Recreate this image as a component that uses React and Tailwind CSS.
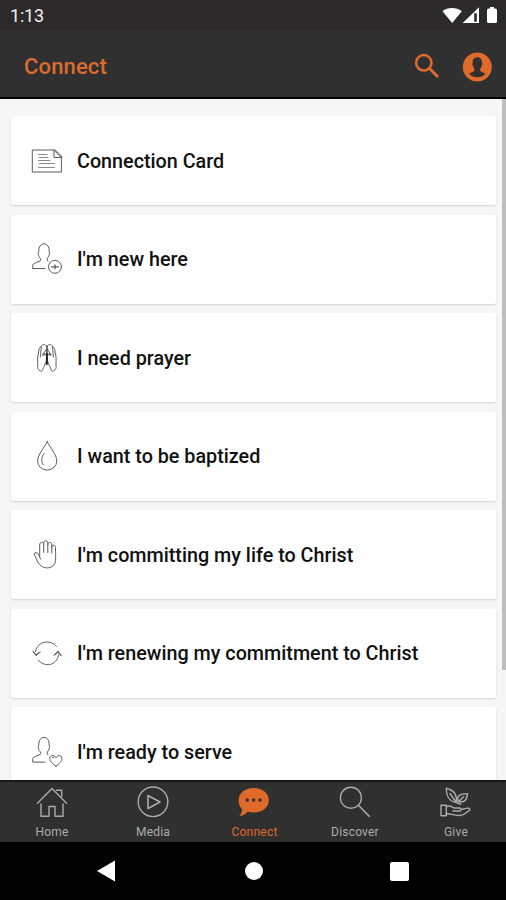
const line = {
  fill: 'none',
  strokeLinecap: 'round',
  strokeLinejoin: 'round',
};

function RowIcon({ children }) {
  return (
    <svg viewBox="0 0 30 30" className="h-[30px] w-[30px] shrink-0 overflow-visible stroke-[#5c5c5c]" strokeWidth="1" {...line}>
      {children}
    </svg>
  );
}

function TabIcon({ children }) {
  return (
    <svg viewBox="0 0 30 30" className="h-[30px] w-[30px] overflow-visible stroke-[#ababab]" strokeWidth="1.4" {...line}>
      {children}
    </svg>
  );
}

const person = 'M13 20.5H.7V17.5Q.8 15.8 3.5 14.8L8 13Q9.5 12 8.2 10.2Q6.8 9 6.3 6.5Q5.8 5 6.7 3.7Q6.5 -3.6 12 -4.3Q17.6 -3.6 17.1 3.5Q18 5 17.3 6.5Q16.8 9 15.4 10.2Q14.7 12 15.8 13.2';

const rows = [
  {
    label: 'Connection Card',
    icon: (
      <>
        <path d="M.7 4H23.3L29.4 10V26H.7Z" />
        <path d="M22 4.2V11.5H29.3L22 4.2" />
        <g className="stroke-[#888]" strokeWidth="1.2">
          <path d="M6.5 8.5H15M7.5 11.5H15.8M6.5 14.5H18M7.5 17.5H22.5M6.5 21.5H22.5" />
        </g>
      </>
    ),
  },
  {
    label: "I'm new here",
    icon: (
      <>
        <path transform="translate(0 4)" d={person} />
        <circle cx="23" cy="22.8" r="6.5" />
        <path d="M19.7 22.8H26.3M23 20.9V24.7" strokeWidth="1.3" />
      </>
    ),
  },
  {
    label: 'I need prayer',
    icon: (
      <>
        <path d="M14.4 3C12.2.5 10.2 1.4 9.4 3.4C7.2 4.2 6.7 7 6.5 10C5.2 13 5.7 18 5.8 23C5.3 25 6 27 9.3 28.3C10.5 28.8 10.8 25.5 12 23.5L14.5 18V3" />
        <path d="M15.3 3C17.5.5 19.5 1.4 20.3 3.4C22.5 4.2 23 7 23.2 10C24.5 13 24 18 24 23C24.5 25 23.7 27 20.5 28.3C19.2 28.8 19 25.5 17.8 23.5L15.3 18V3" />
        <path d="M9.4 4C8.7 8 8.6 11 8.3 14M20.3 4C21 8 21.1 11 21.4 14M14.5 6Q12.6 8.5 10.7 12.6M15.3 6Q17.2 8.5 19 12.6" />
        <path d="M14.9 11V21" strokeWidth="2" className="stroke-[#222]" />
        <path d="M11.3 11.3H13M16.8 11.3H18.5" strokeWidth="1.7" />
      </>
    ),
  },
  {
    label: 'I want to be baptized',
    icon: (
      <>
        <path d="M15.2.7C12.6 6.5 5.6 13.5 5.6 20A9.6 9.1 0 0 0 24.8 20C24.8 13.5 17.8 6.5 15.2.7Z" />
        <path d="M12.2 12.3C9.4 15.5 8.8 20.5 11.2 23.8" />
      </>
    ),
  },
  {
    label: "I'm committing my life to Christ",
    icon: (
      <>
        <path d="M8.6 19.2L7 15.7Q5.8 12.3 3 12.5Q1.7 13 2.7 15.3C4.7 19 4.8 21.5 7.4 24.3C12 29.7 20.6 28.9 22.9 23.2C24.1 20 23.5 15 23.5 7.3C23.3 4.6 20 4.5 19.8 7.2V13M19.8 8V5C19.8 1.5 15.8 1.5 15.8 4.5V12.5M15.8 5V3C15.7.1 11.8.1 11.7 3V12.4M11.7 4C11.4 1.6 7.7 1.7 7.7 4.8V16" />
      </>
    ),
  },
  {
    label: "I'm renewing my commitment to Christ",
    icon: (
      <>
        <path d="M3.5 13.5C5.4 2.6 18.8 1.2 24.6 8.4" />
        <path d="M26.5 17.4C24.5 27.9 12.4 29.6 6.2 22.1" />
        <path d="M.8 13.2L4 17.7L8.4 13.9M1.8 14.1L4 17L7 14.4" />
        <path d="M21.9 17.2L26.1 13.1L29.4 17.7M23 17.2L26.1 14L28.3 17.2" />
      </>
    ),
  },
  {
    label: "I'm ready to serve",
    icon: (
      <>
        <path transform="translate(0 4.6)" d={person} />
        <path d="M24 29.2C21 27 17.7 24.5 17.7 21.4C17.7 17.8 22.3 17.6 24 20.8C25.7 17.6 29.9 17.8 29.9 21.4C29.9 24.5 27 27 24 29.2Z" />
        <path d="M20 20.9Q20.5 19.8 21.8 20.2" />
      </>
    ),
  },
];

const tabs = [
  {
    label: 'Home',
    icon: (
      <TabIcon>
        <path d="M.5 16.2L15 1.5L29.5 16.2M4 17V29.2H12V19.5H18V29.2H26V17M19.5 3.2H24.7V9.5" />
      </TabIcon>
    ),
  },
  {
    label: 'Media',
    icon: (
      <TabIcon>
        <circle cx="15" cy="14.8" r="14.8" />
        <path d="M10 8.5V21.5L22 15Z" strokeWidth="1.6" />
      </TabIcon>
    ),
  },
  {
    label: 'Connect',
    active: true,
    icon: (
      <svg viewBox="0 0 30 30" className="h-[30px] w-[30px] overflow-visible">
        <path fill="#df6a29" d="M14.5 1C23.2 1 29.8 6 29.8 13.3C29.8 20.5 23.5 25.5 14.8 25.5C12.5 25.5 10.5 25.2 8.7 24.7C6.5 27.5 3.5 28.7.2 29C2.4 26.8 3.3 24.5 2.8 21.7C.4 19.5-.4 16.6-.4 13.5C-.4 6.2 6 1 14.5 1Z" />
        <g fill="#302b29">
          <circle cx="8.3" cy="13" r="1.7" />
          <circle cx="14.7" cy="13" r="1.7" />
          <circle cx="21.1" cy="13" r="1.7" />
        </g>
      </svg>
    ),
  },
  {
    label: 'Discover',
    icon: (
      <TabIcon>
        <circle cx="10.9" cy="10.7" r="10.5" />
        <path d="M18.4 18.2L29.2 29.3" strokeWidth="1.6" />
      </TabIcon>
    ),
  },
  {
    label: 'Give',
    icon: (
      <TabIcon>
        <path d="M0 18.2H5.3V28.8H0Z" />
        <path d="M5.3 19.7C8.5 18 10.5 19.2 13 21H18.5C20.8 21.3 20.5 24 18.2 24H11.8M20 22.5L25 21.4C27.5 20.7 29.5 21.5 28.7 23C26.3 25 22.8 28.5 18.5 28.5C13.5 28.5 10 26.5 5.3 26.7" />
        <path d="M15.3 15.5C8.5 14.2 5.3 10.5 5.3 1.2C11.5 2.8 16.5 6.5 15.3 15.5ZM9 6.5L15.3 15.5C17.3 17 18.5 17.3 20 16.8" />
        <path d="M17.3 14.3C15.5 8.8 18.7 6.6 26.5 6.6C26.3 12.5 23.5 16.2 17.3 14.3ZM17 15.2L22.8 9.6" />
      </TabIcon>
    ),
  },
];

function StatusBar() {
  return (
    <div className="flex h-[30px] items-center bg-[#2b292a] pl-[10px] pr-[8px] pt-[2px]">
      <span className="text-[18px] leading-none tracking-[-0.2px] text-[#eee]">1:13</span>
      <svg viewBox="0 0 58 20" className="-mt-px ml-auto h-[20px] w-[58px]" fill="#fff">
        <path d="M2.5 5.3C7.5.9 16.5.9 21.8 5.3L12.2 17Z" />
        <path fillRule="evenodd" d="M39 1.3V17H22.7ZM34.2 7.3V15.8H36.8V7.3Z" />
        <path d="M50 1H54V2.4H55.5Q57 2.4 57 4V15.5Q57 17 55.5 17H48.5Q47 17 47 15.5V4Q47 2.4 48.5 2.4H50Z" />
      </svg>
    </div>
  );
}

function Header() {
  return (
    <header className="flex h-[69px] items-center border-b-2 border-black bg-[#303030] pl-6 pr-[14px] pt-[5px]">
      <h1 className="pt-px text-[22px] font-medium leading-none tracking-[0.15px] text-[#dc6b2f]">Connect</h1>
      <svg viewBox="0 0 26 26" className="ml-auto h-[26px] w-[26px]" fill="none" stroke="#de6b2b">
        <circle cx="9.8" cy="9.8" r="7.7" strokeWidth="2.5" />
        <path d="M15.3 15.3L24 24" strokeWidth="3" />
      </svg>
      <svg viewBox="0 0 30 30" className="ml-[22px] mt-px h-[30px] w-[30px]">
        <circle cx="15.3" cy="15" r="14.5" fill="#df6a29" />
        <path fill="#30302f" d="M15.3 5.2C18.8 5.2 20.3 7.6 19.9 11.1C20.6 12 20 13.6 19.4 14.2C19 16 18 16.6 18 18.2C18.4 20 21.8 20.3 23.5 21.8C21.3 24.3 18.6 25.3 15.3 25.3C12 25.3 9.3 24.3 7.1 21.8C8.8 20.3 12.2 20 12.6 18.2C12.6 16.6 11.6 16 11.2 14.2C10.6 13.6 10 12 10.7 11.1C10.3 7.6 11.8 5.2 15.3 5.2Z" />
      </svg>
    </header>
  );
}

export default function App() {
  return (
    <div className="flex h-[900px] w-[506px] flex-col overflow-hidden bg-black font-[Roboto,'Liberation_Sans',sans-serif]">
      <StatusBar />
      <Header />
      <main className="flex h-[681px] overflow-hidden bg-[#f6f6f6]">
        <ul className="flex h-[681px] w-[502px] flex-col gap-[9.5px] overflow-hidden pl-[11px] pr-[6px] pt-[17px]">
          {rows.map((row) => (
            <li
              key={row.label}
              className="flex h-[89px] shrink-0 items-center gap-[15px] rounded-[2px] bg-white pl-[21px] shadow-[0_1px_2px_rgba(0,0,0,0.15)]"
            >
              <RowIcon>{row.icon}</RowIcon>
              <span className="whitespace-nowrap pt-[2px] text-[19.75px] font-medium leading-none text-[#111]">{row.label}</span>
            </li>
          ))}
        </ul>
        <div className="h-[571px] w-1 bg-[#bebebe]" />
      </main>
      <nav className="flex h-[62px] items-start border-t-2 border-[#171717] bg-[#303030] pl-px pt-[5px]">
        {tabs.map((tab) => (
          <div key={tab.label} className="flex flex-1 flex-col items-center gap-[9px]">
            {tab.icon}
            <span className={tab.active ? 'pl-[2px] text-[12px] leading-none tracking-[0.25px] text-[#df6a29]' : 'pl-px text-[12px] leading-none tracking-[0.2px] text-[#ababab]'}>
              {tab.label}
            </span>
          </div>
        ))}
      </nav>
      <footer className="flex h-[58px] items-center pl-[97px]">
        <svg viewBox="0 0 18 22" className="h-[22px] w-[18px]" fill="#fff">
          <path d="M18 .5V21.5L0 11Z" />
        </svg>
        <div className="ml-[130px] h-[18px] w-[18px] rounded-full bg-white" />
        <div className="ml-[127px] h-[19px] w-[19px] rounded-[2px] bg-white" />
      </footer>
    </div>
  );
}
